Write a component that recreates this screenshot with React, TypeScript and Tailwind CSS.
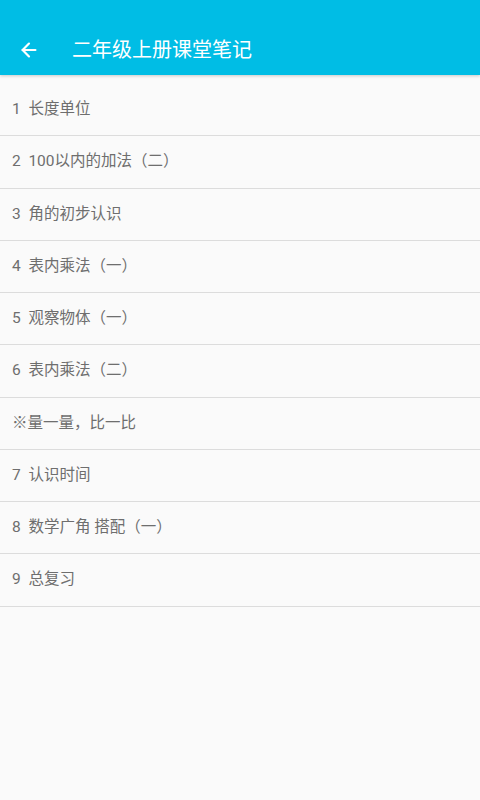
import { ArrowLeft } from 'lucide-react';

const items = [
  '1  长度单位',
  '2  100以内的加法（二）',
  '3  角的初步认识',
  '4  表内乘法（一）',
  '5  观察物体（一）',
  '6  表内乘法（二）',
  '※量一量，比一比',
  '7  认识时间',
  '8  数学广角 搭配（一）',
  '9  总复习',
];

export default function App() {
  return (
    <div
      className="w-[480px] h-[800px] bg-[#fafafa] flex flex-col overflow-hidden"
      style={{ fontFamily: 'Roboto, "Noto Sans CJK SC", sans-serif' }}
    >
      {/* Toolbar (status bar area included) */}
      <header className="h-[75px] pt-[25px] bg-[#00bde5] flex items-center shrink-0 shadow-[0_1px_3px_rgba(0,0,0,0.2)] z-10">
        <div className="w-[24px] h-[24px] ml-[17px] flex items-center justify-center text-white">
          <ArrowLeft className="w-[22px] h-[22px]" strokeWidth={2.4} />
        </div>
        <h1 className="ml-[31px] text-white text-[20px] leading-none">二年级上册课堂笔记</h1>
      </header>

      {/* List */}
      <ul className="pt-[9px]">
        {items.map(item => (
          <li
            key={item}
            className="h-[52.25px] flex items-center px-[12px] border-b border-[#dcdcdc] text-[15.5px] text-[#6e6e6e] whitespace-pre"
          >
            {item}
          </li>
        ))}
      </ul>
    </div>
  );
}
